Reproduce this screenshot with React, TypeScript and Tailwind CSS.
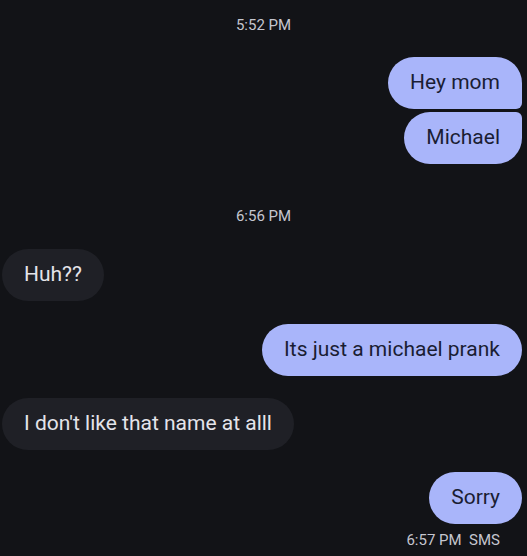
import React from 'react';

const font = { fontFamily: 'Roboto, "Noto Sans", sans-serif' };

function Stamp({ text, className = '' }: { text: string; className?: string }) {
  return (
    <div className={`h-5 flex items-center justify-center text-[15px] text-[#c5c6cf] ${className}`}>
      {text}
    </div>
  );
}

function Sent({ text, corners, className = '' }: { text: string; corners: string; className?: string }) {
  return (
    <div className={`flex justify-end pr-[5px] ${className}`}>
      <div className={`h-[52px] flex items-center px-[22px] bg-[#a9b5fa] text-[#1a1d33] text-[21px] ${corners}`}>
        {text}
      </div>
    </div>
  );
}

function Received({ text, className = '' }: { text: string; className?: string }) {
  return (
    <div className={`flex justify-start pl-[2px] ${className}`}>
      <div className="h-[52px] flex items-center px-[22px] bg-[#1f2026] text-[#e4e4ea] text-[21px] rounded-[26px]">
        {text}
      </div>
    </div>
  );
}

export default function App() {
  return (
    <div className="w-[527px] h-[556px] bg-[#121317] overflow-hidden pt-[15px]" style={font}>
      <Stamp text="5:52 PM" />
      <Sent text="Hey mom" corners="rounded-[26px] rounded-br-[6px]" className="mt-[22px]" />
      <Sent text="Michael" corners="rounded-[26px] rounded-tr-[6px]" className="mt-[3px]" />
      <Stamp text="6:56 PM" className="mt-[42px]" />
      <Received text="Huh??" className="mt-[23px]" />
      <Sent text="Its just a michael prank" corners="rounded-[26px]" className="mt-[23px]" />
      <Received text="I don't like that name at alll" className="mt-[22px]" />
      <Sent text="Sorry" corners="rounded-[26px]" className="mt-[22px]" />
      <div className="mt-[6px] h-5 flex items-center justify-end pr-[27px] text-[15px] text-[#c5c6cf]">
        6:57 PM&nbsp;&nbsp;SMS
      </div>
    </div>
  );
}
